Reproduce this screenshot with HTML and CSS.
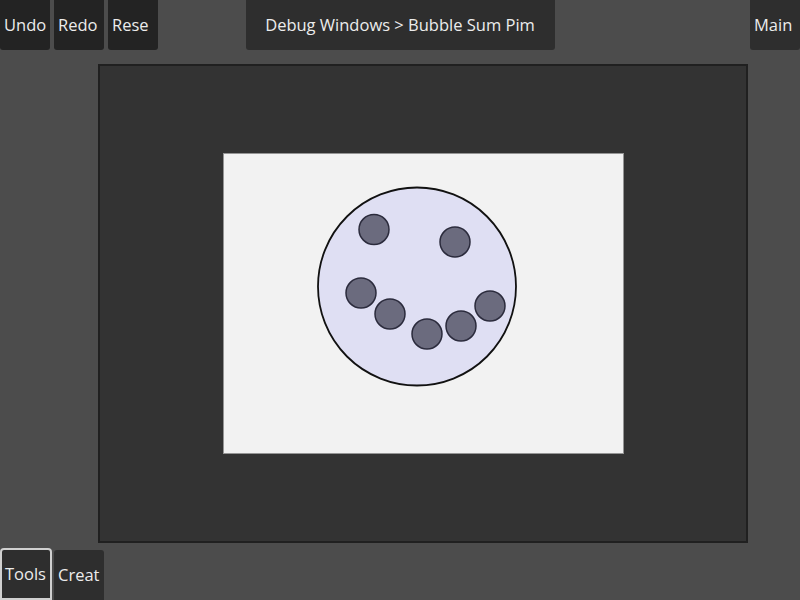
FILE: index.html
```html
<!DOCTYPE html>
<html>
<head>
<meta charset="utf-8">
<link rel="stylesheet" href="styles.css">
</head>
<body>
<div class="app">
  <header class="topbar">
    <div class="group left">
      <div class="btn">Undo</div>
      <div class="btn">Redo</div>
      <div class="btn">Rese</div>
    </div>
    <div class="title">Debug Windows &gt; Bubble Sum Pim</div>
    <div class="group right">
      <div class="btn main">Main</div>
    </div>
  </header>
  <main class="stage">
    <div class="panel">
      <div class="paper">
        <svg width="399" height="299" viewBox="1 1 399 299">
          <circle cx="194" cy="133.5" r="99" fill="#dfdff3" stroke="#111" stroke-width="1.8"/>
          <g fill="#6b6b7e" stroke="#2b2b3c" stroke-width="1.5">
            <circle cx="151" cy="76.5" r="15"/>
            <circle cx="232" cy="89" r="15"/>
            <circle cx="138" cy="140" r="15"/>
            <circle cx="167" cy="161" r="15"/>
            <circle cx="204" cy="181" r="15"/>
            <circle cx="238" cy="173" r="15"/>
            <circle cx="267" cy="153" r="15"/>
          </g>
        </svg>
      </div>
    </div>
  </main>
  <footer class="bottombar">
    <div class="btn tools">Tools</div>
    <div class="btn creat">Creat</div>
  </footer>
</div>
</body>
</html>
```
FILE: styles.css
```css
html, body {
  margin: 0;
  padding: 0;
  background: #4c4c4c;
  font-family: "Open Sans", "Noto Sans", sans-serif;
  color: #ececec;
}
.app {
  width: 800px;
  height: 600px;
  display: flex;
  flex-direction: column;
  overflow: hidden;
}
.topbar {
  height: 50px;
  display: grid;
  grid-template-columns: 1fr auto 1fr;
}
.group {
  display: flex;
  gap: 4px;
}
.group.right {
  justify-content: flex-end;
}
.btn {
  width: 50px;
  height: 50px;
  box-sizing: border-box;
  background: #232323;
  border-radius: 0 0 3px 3px;
  font-size: 16.5px;
  font-weight: 500;
  line-height: 50px;
  white-space: nowrap;
  overflow: hidden;
  padding-left: 4px;
}
.btn.main {
  background: #2e2e2e;
}
.title {
  width: 309px;
  height: 50px;
  background: #2e2e2e;
  border-radius: 0 0 3px 3px;
  font-size: 16.5px;
  font-weight: 500;
  line-height: 50px;
  text-align: center;
}
.stage {
  flex: 1;
  padding: 14px 0 0 98px;
}
.panel {
  width: 650px;
  height: 479px;
  box-sizing: border-box;
  background: #333333;
  border: 2px solid #202020;
  display: flex;
  align-items: center;
  justify-content: center;
}
.paper {
  width: 401px;
  height: 301px;
  box-sizing: border-box;
  background: #f2f2f2;
  border: 1px solid #959595;
  display: flex;
  margin-left: 1px;
}
.bottombar {
  height: 52px;
  display: flex;
  gap: 2px;
  align-items: flex-end;
}
.btn.tools {
  width: 52px;
  height: 52px;
  background: #2e2e2e;
  border: 2px solid #d0d0d0;
  border-radius: 4px 4px 0 0;
  line-height: 48px;
  padding-left: 3px;
}
.btn.creat {
  height: 50px;
  background: #2e2e2e;
  border-radius: 3px 3px 0 0;
}
```
